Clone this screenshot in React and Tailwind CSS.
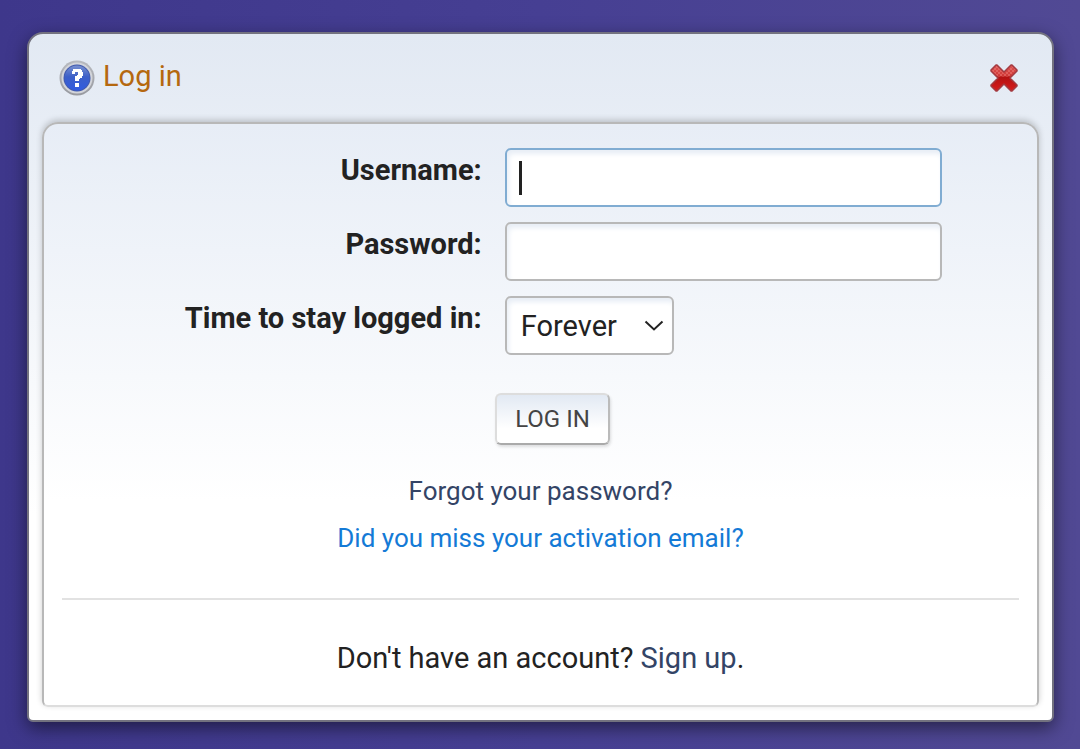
const field =
  "h-[59px] rounded-md border-2 bg-white px-3.5 text-[29px] text-[#222] shadow-[inset_2px_4px_5px_#e8eef6] outline-none";

function HelpIcon() {
  return (
    <svg className="size-9 shrink-0" viewBox="0 0 36 36" aria-hidden="true">
      <defs>
        <linearGradient id="ring" x1="0" y1="0" x2="0" y2="1">
          <stop offset="0" stopColor="#b9bbc0" />
          <stop offset="1" stopColor="#97999f" />
        </linearGradient>
        <linearGradient id="disc" x1="0" y1="0" x2="0" y2="1">
          <stop offset="0" stopColor="#7890cf" />
          <stop offset="0.45" stopColor="#3c5fc8" />
          <stop offset="1" stopColor="#315be0" />
        </linearGradient>
      </defs>
      <circle cx="18" cy="18" r="17.5" fill="url(#ring)" />
      <circle cx="18" cy="18" r="15.5" fill="#d3d5da" />
      <circle cx="18" cy="18" r="13.5" fill="#4059ad" />
      <circle cx="18" cy="18" r="12.5" fill="url(#disc)" />
      <path
        d="M14 9h8v1h1v2h1v4h-1v2h-2v1h-1v2h-4v-5h2v-1h1v-3h-3v2h-3v-3h1z M16 23h4v4h-4z"
        fill="#fff"
      />
    </svg>
  );
}

function CloseIcon() {
  return (
    <svg className="size-7" viewBox="0 0 28 28" aria-hidden="true">
      <defs>
        <linearGradient id="cross" x1="0" y1="0" x2="0" y2="1">
          <stop offset="0" stopColor="#dc5553" />
          <stop offset="0.4" stopColor="#d03a38" />
          <stop offset="0.48" stopColor="#b41212" />
          <stop offset="1" stopColor="#d81c1c" />
        </linearGradient>
        <pattern id="dots" width="4" height="4" patternUnits="userSpaceOnUse">
          <path d="M0 0h2v2H0zM2 2h2v2H2z" fill="#f08580" opacity="0.45" />
        </pattern>
      </defs>
      <path
        d="M6 1h1l7 7 7-7h1l5 5v1l-7 7 7 7v1l-5 5h-1l-7-7-7 7H6l-5-5v-1l7-7-7-7V6z"
        fill="url(#cross)"
        stroke="#a33c42"
        strokeWidth="1.5"
        strokeLinejoin="round"
      />
      <path d="M6.500 2L14 9.500 21.500 2 26 6.500 20 12.500H8L2 6.500z" fill="url(#dots)" />
    </svg>
  );
}

export default function App() {
  return (
    <main
      className="min-h-screen bg-linear-to-r from-[#3e378b] via-[#463f93] to-[#514994] pt-8 pr-[26px] pb-[27px] pl-[27px] text-[29px] leading-9 text-[#222]"
      style={{ fontFamily: 'Roboto, "Liberation Sans", sans-serif' }}
    >
      <section className="rounded-t-2xl rounded-b-md border-2 border-[#73727f] bg-linear-to-b from-[#e2e9f3] to-white to-70% px-[13px] pb-[13px] shadow-[0_6px_18px_rgba(0,0,0,0.5)]">
        <header className="flex h-[88px] items-center justify-between pr-[21px] pl-[17px]">
          <h1 className="flex items-center gap-2 text-[#b5680f]">
            <HelpIcon />
            <span className="pb-1">Log in</span>
          </h1>
          <button type="button" aria-label="Close">
            <CloseIcon />
          </button>
        </header>

        <div className="rounded-t-2xl rounded-b-md border-2 border-[#b8b8b8] border-b-[#ddd] bg-linear-to-b from-[#e7edf6] to-white to-65% px-[18px] pt-6 pb-[29px] shadow-[0_-2px_6px_rgba(0,0,0,0.2)]">
          <form onSubmit={(e) => e.preventDefault()}>
            <div className="grid grid-cols-[9fr_11fr] gap-x-[22px] gap-y-[15px]">
              <label htmlFor="user" className="pt-1 pr-px text-right font-bold">
                Username:
              </label>
              <div className="relative flex">
                <input id="user" type="text" className={`${field} w-full max-w-[437px] border-[#80acd2] caret-transparent`} />
                <span className="pointer-events-none absolute top-[13px] left-3.5 h-[34px] w-[3px] bg-[#222]" />
              </div>
              <label htmlFor="pass" className="pt-1 pr-px text-right font-bold">
                Password:
              </label>
              <div className="flex">
                <input id="pass" type="password" className={`${field} w-full max-w-[437px] border-[#b8b8b8]`} />
              </div>
              <label htmlFor="time" className="pt-1 pr-px text-right font-bold">
                Time to stay logged in:
              </label>
              <div className="flex">
                <div className="relative">
                  <select id="time" className={`${field} w-[169px] appearance-none border-[#b8b8b8]`}>
                    <option>Forever</option>
                  </select>
                  <svg className="pointer-events-none absolute top-6 right-2.5 h-3 w-5" viewBox="0 0 20 12" fill="none" stroke="#222" strokeWidth="2" aria-hidden="true">
                    <path d="M1.500 1.500L10 9.500l8.500-8" />
                  </svg>
                </div>
              </div>
            </div>
            <div className="mt-[38px] flex justify-center pl-6">
              <button
                type="submit"
                className="h-[52px] rounded-md border-2 border-t-[#ddd] border-r-[#bbb] border-b-[#aaa] border-l-[#ddd] bg-linear-to-b from-[#e2e9f3] to-white to-70% px-[18px] text-2xl text-[#444] shadow-[1px_2px_3px_rgba(0,0,0,0.12)]"
              >
                LOG IN
              </button>
            </div>
          </form>
          <p className="mt-7 text-center text-[26px]">
            <a href="#reminder" className="text-[#334466]">Forgot your password?</a>
          </p>
          <p className="mt-[11px] text-center text-[26px]">
            <a href="#activate" className="text-[#147ad6]">Did you miss your activation email?</a>
          </p>
          <hr className="mt-[42px] border-t-2 border-[#e2e2e2]" />
          <p className="mt-10 text-center">
            Don't have an account? <a href="#signup" className="text-[#334466]">Sign up</a>.
          </p>
        </div>
      </section>
    </main>
  );
}
